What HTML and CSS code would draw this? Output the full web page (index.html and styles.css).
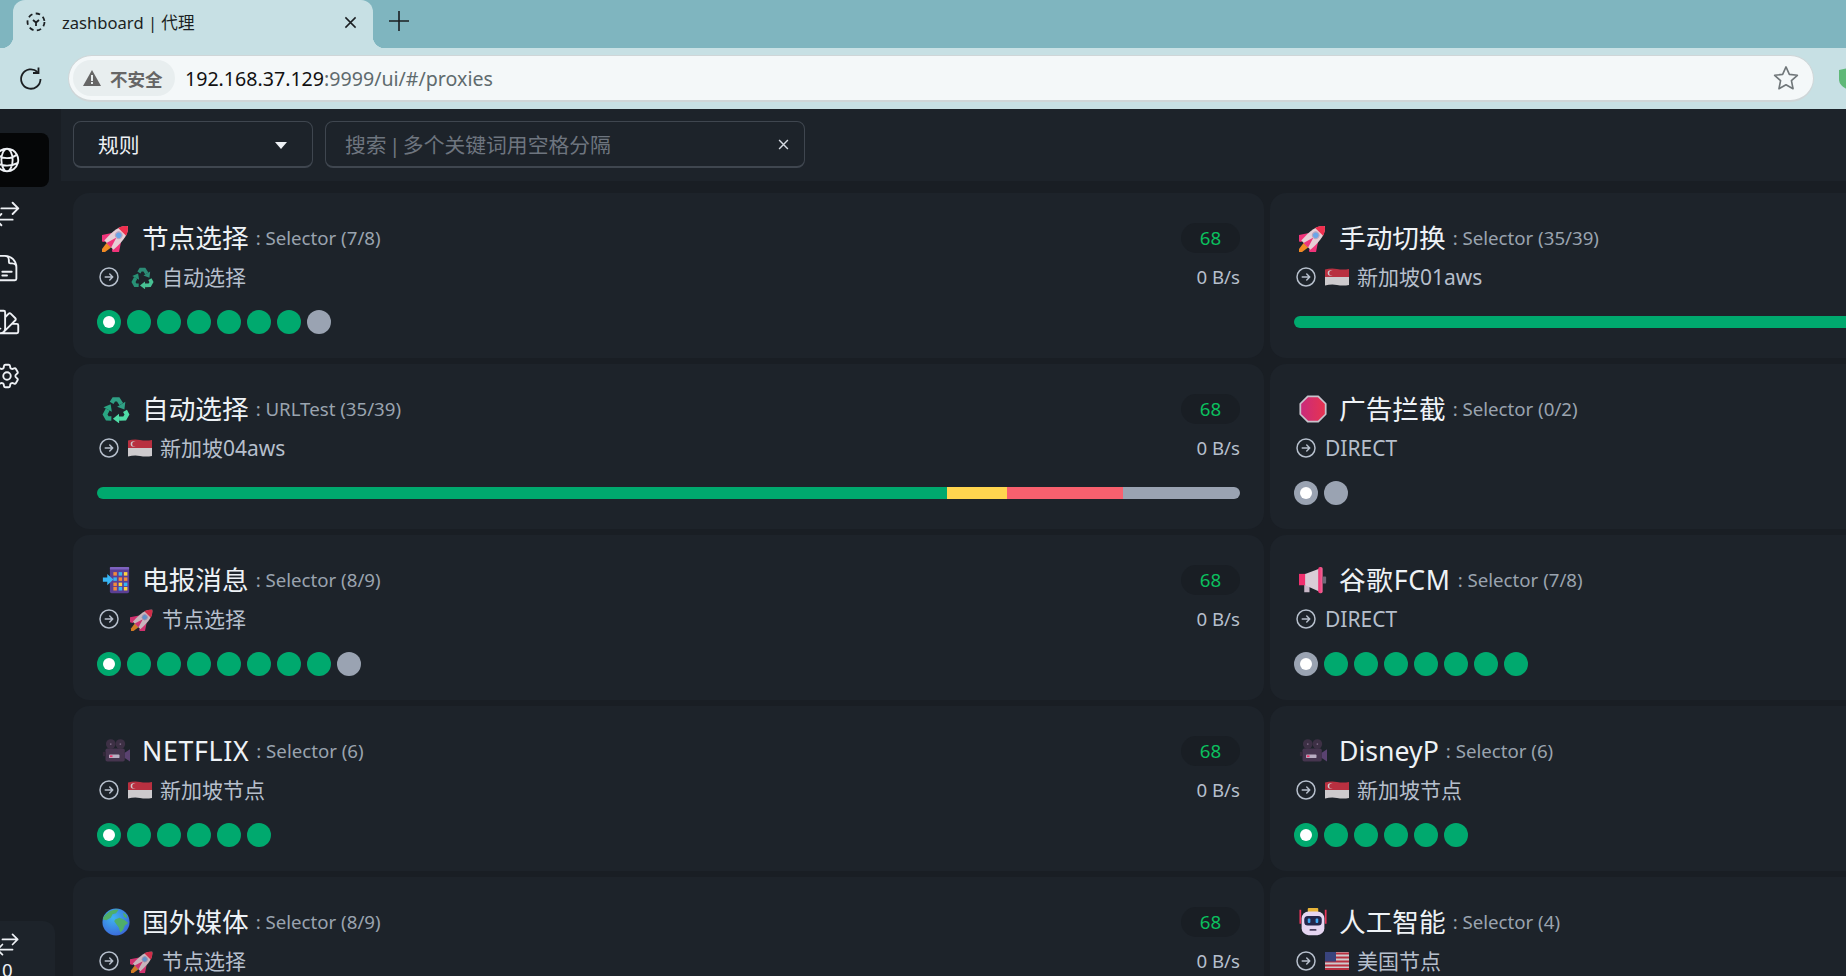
FILE: index.html
```html
<!DOCTYPE html>
<html lang="zh-CN">
<head>
    <meta charset="UTF-8">
    <title>zashboard | 代理</title>
    <link rel="stylesheet" href="styles.css">
</head>
<body>
    <!-- emoji drawn once, used by every card -->
    <svg class="sprites" aria-hidden="true">
        <defs>
            <linearGradient id="grad-stop" x1="0" x2="1" y1="0" y2="0"><stop offset="0" stop-color="#c92a7c"/><stop offset="1" stop-color="#e8344f"/></linearGradient>
            <linearGradient id="grad-horn" x1="0" x2="1" y1="0" y2="0"><stop offset="0" stop-color="#f02a6e"/><stop offset="1" stop-color="#f56a9a"/></linearGradient>
            <radialGradient id="grad-globe" cx=".4" cy=".35" r=".75"><stop offset="0" stop-color="#3fb4f0"/><stop offset="1" stop-color="#3a62d8"/></radialGradient>
            <g id="recycle-arm">
                <path d="M11 9l2.500-4h5l3.500 5.500" fill="none" stroke-width="5"/>
                <path d="M26.700 7.700L17.300 13.300 25.600 16.500z" stroke="none"/>
            </g>
            <symbol id="e-rocket" viewBox="4 2 26 26">
                <g transform="rotate(45 16 16)">
                    <path d="M13 24h6l-1 7-2 2-2-2z" fill="#f08a24"/>
                    <path d="M10 14l-6 9 2 5 5-3zM22 14l6 9-2 5-5-3z" fill="#f0347a"/>
                    <path d="M16 -1c5 4 7 11 6 25H10c-1-14 1-21 6-25z" fill="#e6cfd6"/>
                    <path d="M16 -1c2.500 2 4.200 4.400 5.200 7.500H10.800c1-3.100 2.700-5.500 5.200-7.500z" fill="#f0304f"/>
                    <path d="M16 14l3 10h-6z" fill="#f0347a"/>
                    <circle cx="16" cy="11" r="3" fill="#6aa6e8" stroke="#b9a4c0"/>
                </g>
            </symbol>
            <symbol id="e-recycle" viewBox="0 0 32 32">
                <use href="#recycle-arm" fill="#2f9f84" stroke="#2f9f84"/>
                <use href="#recycle-arm" fill="#4fdca6" stroke="#4fdca6" transform="rotate(120 16 18)"/>
                <use href="#recycle-arm" fill="#2aa583" stroke="#2aa583" transform="rotate(240 16 18)"/>
            </symbol>
            <symbol id="e-phone" viewBox="0 0 32 32">
                <rect x="9" y="1" width="22" height="30" rx="2" fill="#5b3f94"/>
                <rect x="9" y="1" width="22" height="3" rx="1" fill="#7e63c0"/>
                <g fill="#f28a3c"><rect x="13" y="7" width="4" height="4"/><rect x="19" y="13" width="4" height="4"/><rect x="25" y="13" width="4" height="4"/></g>
                <g fill="#35b4f2"><rect x="19" y="7" width="4" height="4"/><rect x="13" y="13" width="4" height="4"/><rect x="25" y="19" width="4" height="4"/></g>
                <g fill="#ffd23f"><rect x="25" y="7" width="4" height="4"/><rect x="19" y="19" width="4" height="4"/></g>
                <g fill="#f28a3c"><rect x="13" y="19" width="4" height="4"/><rect x="13" y="24" width="4" height="4"/></g>
                <rect x="19" y="24" width="4" height="4" fill="#35b4f2"/><rect x="25" y="24" width="4" height="4" fill="#ffd23f"/>
                <path d="M1 13h5V9l7 6.500L6 22v-4H1z" fill="#38b6f5"/>
            </symbol>
            <symbol id="e-camera" viewBox="0 0 32 32">
                <circle cx="10" cy="8" r="5.500" fill="#3d3045"/><circle cx="21" cy="8" r="5.500" fill="#3d3045"/>
                <circle cx="10" cy="8" r="1" fill="#7d6a86"/><circle cx="21" cy="8" r="1" fill="#7d6a86"/>
                <rect x="4" y="13" width="22" height="15" rx="2" fill="#46354f"/>
                <path d="M1 17h3v5H1z" fill="#332839"/>
                <path d="M26 18l6-4v14l-6-4z" fill="#5a4270"/>
                <rect x="8" y="20" width="12" height="4" rx="1" fill="#b9adc2"/>
                <rect x="9" y="21" width="3" height="2" fill="#f0306a"/>
            </symbol>
            <symbol id="e-globe" viewBox="0 0 32 32">
                <circle cx="16" cy="16" r="15.500" fill="url(#grad-globe)"/>
                <path d="M6 6c4-4 10-5 13-4l-3 4-4 1-2 4-5 3-4-1c0-2 2-5 5-7zM15 13l5-2 5 2 5 4-4 3-2 5-3 3-2-6-3-4-2-3zM24 5l4 3 1 4-4-2z" fill="#4fae6a"/>
            </symbol>
            <symbol id="e-stop" viewBox="0 0 32 32">
                <path d="M10 1.500h12l8.500 8.500v12L22 30.500H10L1.500 22V10z" fill="url(#grad-stop)" stroke="#c8c3cc" stroke-width="2" stroke-linejoin="round"/>
            </symbol>
            <symbol id="e-horn" viewBox="0 0 32 32">
                <rect x="6" y="21" width="6" height="9" fill="#c9b8c8"/>
                <rect x="0" y="9" width="8" height="13" fill="#f0306e"/>
                <path d="M7 9l16-6v26L7 22z" fill="#d9ccd6"/>
                <rect x="22" y="1" width="5" height="30" rx="2" fill="url(#grad-horn)"/>
                <rect x="27" y="12" width="4" height="8" rx="1" fill="#6d6877"/>
            </symbol>
            <symbol id="e-robot" viewBox="0 0 32 32">
                <path d="M1.500 2v16M30.500 2v16" stroke="#e8345a" stroke-width="2"/>
                <rect x="10" y="0" width="12" height="5" rx="1" fill="#e8b53a"/>
                <rect x="3" y="4" width="26" height="27" rx="8" fill="#e5d6f2"/>
                <rect x="6" y="9" width="20" height="11" rx="4" fill="#23264a"/>
                <rect x="10" y="12" width="3" height="5" rx="1" fill="#3fa9f5"/><rect x="19" y="12" width="3" height="5" rx="1" fill="#3fa9f5"/>
                <rect x="12" y="24" width="8" height="2" rx="1" fill="#4a4060"/>
            </symbol>
            <symbol id="e-sg" viewBox="0 0 24 18">
                <path d="M0 1.500Q6 0 12 1t12 0v8H0z" fill="#d43345"/>
                <path d="M0 9h24v8q-6 1-12 0t-12 .6z" fill="#ece8ea"/>
                <circle cx="5.500" cy="5" r="2.800" fill="#ece8ea"/><circle cx="6.800" cy="5" r="2.600" fill="#d43345"/>
            </symbol>
            <symbol id="e-us" viewBox="0 0 24 18">
                <rect width="24" height="18" rx="1" fill="#ece8ea"/>
                <path d="M0 1.500h24M0 5.500h24M0 9.500h24M0 13.500h24M0 17h24" stroke="#d43345" stroke-width="2"/>
                <rect width="11" height="9.500" fill="#3f4a8c"/>
            </symbol>
        </defs>
    </svg>

    <div class="tab-strip">
        <div class="tab">
            <svg class="favicon" viewBox="0 0 20 20" fill="none" stroke="#1b1f22" stroke-width="1.800">
                <circle cx="10" cy="10" r="8.500" stroke-dasharray="4.500 3.400"/>
                <path d="M7 8l3 2.500L13 8M10 10.500V14"/>
            </svg>
            <span class="tab-title">zashboard | 代理</span>
            <svg class="tab-close" viewBox="0 0 14 14" stroke="#1b1f22" stroke-width="1.600"><path d="M1.500 1.500l11 11M12.500 1.500l-11 11"/></svg>
        </div>
        <svg class="new-tab" viewBox="0 0 20 20" stroke="#1b1f22" stroke-width="1.600"><path d="M10 0v20M0 10h20"/></svg>
    </div>

    <div class="toolbar">
        <svg class="reload" viewBox="0 0 24 24" fill="none" stroke="#1b1f22" stroke-width="1.800">
            <path d="M21.500 12a9.700 9.700 0 1 1-3-7"/><path d="M19.500 0.500v5.500h-5.500"/>
        </svg>
        <div class="omnibox">
            <div class="not-secure">
                <svg class="warn" viewBox="0 0 18 16"><path d="M9 0l9 16H0z" fill="#666"/><path d="M8 5h2v6H8zM8 12h2v2H8z" fill="#e8eeef"/></svg>
                <span>不安全</span>
            </div>
            <div class="url"><span class="host">192.168.37.129</span>:9999/ui/#/proxies</div>
            <svg class="star" viewBox="0 0 24 24" fill="none" stroke="#70777a" stroke-width="1.500" stroke-linejoin="round"><path d="M12 1.800l3.100 6.900 7.400.8-5.500 5 1.500 7.400-6.500-3.700-6.500 3.700 1.500-7.400-5.500-5 7.400-.8z"/></svg>
        </div>
        <svg class="shield" viewBox="0 0 20 22"><path d="M0 2l10-2 10 2v9c0 6-5 9-10 11C5 20 0 17 0 11z" fill="#5fb878"/></svg>
    </div>

    <div class="app">
        <aside class="sidebar">
            <nav class="menu">
                <a class="menu-item active"><svg class="menu-icon" viewBox="0 0 24 24"><path d="M12 21a9.004 9.004 0 0 0 8.716-6.747M12 21a9.004 9.004 0 0 1-8.716-6.747M12 21c2.485 0 4.5-4.03 4.5-9S14.485 3 12 3m0 18c-2.485 0-4.5-4.03-4.5-9S9.515 3 12 3m0 0a8.997 8.997 0 0 1 7.843 4.582M12 3a8.997 8.997 0 0 0-7.843 4.582m15.686 0A11.953 11.953 0 0 1 12 10.500c-2.998 0-5.740-1.100-7.843-2.918m15.686 0A8.959 8.959 0 0 1 21 12c0 .778-.099 1.533-.284 2.253m0 0A17.919 17.919 0 0 1 12 16.500c-3.162 0-6.133-.815-8.716-2.247m0 0A9.015 9.015 0 0 1 3 12c0-1.605.42-3.113 1.157-4.418"/></svg></a>
                <a class="menu-item"><svg class="menu-icon" viewBox="0 0 24 24"><path d="M7.500 21 3 16.500m0 0L7.500 12M3 16.500h13.500m0-13.500L21 7.500m0 0L16.500 12M21 7.500H7.500"/></svg></a>
                <a class="menu-item"><svg class="menu-icon" viewBox="0 0 24 24"><path d="M19.500 14.250v-2.625a3.375 3.375 0 0 0-3.375-3.375h-1.500A1.125 1.125 0 0 1 13.500 7.125v-1.500a3.375 3.375 0 0 0-3.375-3.375H8.250m0 12.750h7.500m-7.500 3H12M10.500 2.250H5.625c-.621 0-1.125.504-1.125 1.125v17.250c0 .621.504 1.125 1.125 1.125h12.750c.621 0 1.125-.504 1.125-1.125V11.250a9 9 0 0 0-9-9Z"/></svg></a>
                <a class="menu-item"><svg class="menu-icon" viewBox="0 0 24 24"><path d="M4.098 19.902a3.750 3.750 0 0 0 5.304 0l6.401-6.402M6.750 21A3.750 3.750 0 0 1 3 17.250V4.125C3 3.504 3.504 3 4.125 3h5.250c.621 0 1.125.504 1.125 1.125v4.072M6.750 21a3.750 3.750 0 0 0 3.750-3.750V8.197M6.750 21h13.125c.621 0 1.125-.504 1.125-1.125v-5.250c0-.621-.504-1.125-1.125-1.125h-4.072M10.500 8.197l2.880-2.880c.438-.439 1.150-.439 1.590 0l3.712 3.713c.44.44.44 1.152 0 1.590l-2.879 2.880M6.750 17.250h.008v.008H6.750v-.008Z"/></svg></a>
                <a class="menu-item"><svg class="menu-icon" viewBox="0 0 24 24"><path d="M9.594 3.940c.09-.542.56-.94 1.110-.94h2.593c.55 0 1.020.398 1.110.94l.213 1.281c.063.374.313.686.645.870.074.04.147.083.22.127.325.196.72.257 1.075.124l1.217-.456a1.125 1.125 0 0 1 1.370.49l1.296 2.247a1.125 1.125 0 0 1-.26 1.431l-1.003.827c-.293.241-.438.613-.43.992a7.723 7.723 0 0 1 0 .255c-.008.378.137.75.43.991l1.004.827c.424.35.534.955.26 1.430l-1.298 2.247a1.125 1.125 0 0 1-1.369.491l-1.217-.456c-.355-.133-.75-.072-1.076.124a6.470 6.470 0 0 1-.22.128c-.331.183-.581.495-.644.869l-.213 1.281c-.09.543-.56.94-1.110.94h-2.594c-.55 0-1.019-.398-1.110-.94l-.213-1.281c-.062-.374-.312-.686-.644-.870a6.520 6.520 0 0 1-.22-.127c-.325-.196-.72-.257-1.076-.124l-1.217.456a1.125 1.125 0 0 1-1.369-.49l-1.297-2.247a1.125 1.125 0 0 1 .26-1.431l1.004-.827c.292-.24.437-.613.43-.991a6.932 6.932 0 0 1 0-.255c.007-.38-.138-.751-.43-.992l-1.004-.827a1.125 1.125 0 0 1-.26-1.430l1.297-2.247a1.125 1.125 0 0 1 1.370-.491l1.216.456c.356.133.751.072 1.076-.124.072-.044.146-.086.22-.128.332-.183.582-.495.644-.869l.214-1.280Z"/><path d="M15 12a3 3 0 1 1-6 0 3 3 0 0 1 6 0Z"/></svg></a>
            </nav>
            <div class="conn-box">
                <svg class="conn-icon" viewBox="0 0 24 24"><path d="M7.500 21 3 16.500m0 0L7.500 12M3 16.500h13.500m0-13.500L21 7.500m0 0L16.500 12M21 7.500H7.500"/></svg>
                <div class="conn-count">0</div>
            </div>
        </aside>

        <main class="main">
            <div class="ctrl-bar">
                <div class="mode-select">
                    <span>规则</span>
                    <i class="caret"></i>
                </div>
                <div class="search-box">
                    <span class="placeholder">搜索 | 多个关键词用空格分隔</span>
                    <svg class="search-clear" viewBox="0 0 10 10" stroke="#d5dae2" stroke-width="1.300"><path d="M1 1l8 8M9 1l-8 8"/></svg>
                </div>
            </div>

            <div class="groups">
                <section class="card">
                    <div class="card-row">
                        <h2 class="title"><svg class="emoji"><use href="#e-rocket"/></svg><span class="name">节点选择</span><span class="kind">: Selector (7/8)</span></h2>
                        <span class="latency">68</span>
                    </div>
                    <div class="card-row sub">
                        <div class="now"><svg class="go" viewBox="0 0 24 24"><path d="m12.750 15 3-3m0 0-3-3m3 3h-7.500M21 12a9 9 0 1 1-18 0 9 9 0 0 1 18 0Z"/></svg><svg class="mini"><use href="#e-recycle"/></svg><span>自动选择</span></div>
                        <span class="speed">0 B/s</span>
                    </div>
                    <div class="dots"><i class="dot on"></i><i class="dot"></i><i class="dot"></i><i class="dot"></i><i class="dot"></i><i class="dot"></i><i class="dot"></i><i class="dot off"></i></div>
                </section>

                <section class="card">
                    <div class="card-row">
                        <h2 class="title"><svg class="emoji"><use href="#e-rocket"/></svg><span class="name">手动切换</span><span class="kind">: Selector (35/39)</span></h2>
                    </div>
                    <div class="card-row sub">
                        <div class="now"><svg class="go" viewBox="0 0 24 24"><path d="m12.750 15 3-3m0 0-3-3m3 3h-7.500M21 12a9 9 0 1 1-18 0 9 9 0 0 1 18 0Z"/></svg><svg class="mini flag"><use href="#e-sg"/></svg><span>新加坡01aws</span></div>
                    </div>
                    <div class="bar"><i class="seg green" style="width:100%"></i></div>
                </section>

                <section class="card">
                    <div class="card-row">
                        <h2 class="title"><svg class="emoji"><use href="#e-recycle"/></svg><span class="name">自动选择</span><span class="kind">: URLTest (35/39)</span></h2>
                        <span class="latency">68</span>
                    </div>
                    <div class="card-row sub">
                        <div class="now"><svg class="go" viewBox="0 0 24 24"><path d="m12.750 15 3-3m0 0-3-3m3 3h-7.500M21 12a9 9 0 1 1-18 0 9 9 0 0 1 18 0Z"/></svg><svg class="mini flag"><use href="#e-sg"/></svg><span>新加坡04aws</span></div>
                        <span class="speed">0 B/s</span>
                    </div>
                    <div class="bar"><i class="seg green" style="width:74.4%"></i><i class="seg yellow" style="width:5.2%"></i><i class="seg red" style="width:10.2%"></i><i class="seg gray" style="width:10.2%"></i></div>
                </section>

                <section class="card">
                    <div class="card-row">
                        <h2 class="title"><svg class="emoji"><use href="#e-stop"/></svg><span class="name">广告拦截</span><span class="kind">: Selector (0/2)</span></h2>
                    </div>
                    <div class="card-row sub">
                        <div class="now"><svg class="go" viewBox="0 0 24 24"><path d="m12.750 15 3-3m0 0-3-3m3 3h-7.500M21 12a9 9 0 1 1-18 0 9 9 0 0 1 18 0Z"/></svg><span>DIRECT</span></div>
                    </div>
                    <div class="dots"><i class="dot off on"></i><i class="dot off"></i></div>
                </section>

                <section class="card">
                    <div class="card-row">
                        <h2 class="title"><svg class="emoji"><use href="#e-phone"/></svg><span class="name">电报消息</span><span class="kind">: Selector (8/9)</span></h2>
                        <span class="latency">68</span>
                    </div>
                    <div class="card-row sub">
                        <div class="now"><svg class="go" viewBox="0 0 24 24"><path d="m12.750 15 3-3m0 0-3-3m3 3h-7.500M21 12a9 9 0 1 1-18 0 9 9 0 0 1 18 0Z"/></svg><svg class="mini"><use href="#e-rocket"/></svg><span>节点选择</span></div>
                        <span class="speed">0 B/s</span>
                    </div>
                    <div class="dots"><i class="dot on"></i><i class="dot"></i><i class="dot"></i><i class="dot"></i><i class="dot"></i><i class="dot"></i><i class="dot"></i><i class="dot"></i><i class="dot off"></i></div>
                </section>

                <section class="card">
                    <div class="card-row">
                        <h2 class="title"><svg class="emoji"><use href="#e-horn"/></svg><span class="name caps">谷歌FCM</span><span class="kind">: Selector (7/8)</span></h2>
                    </div>
                    <div class="card-row sub">
                        <div class="now"><svg class="go" viewBox="0 0 24 24"><path d="m12.750 15 3-3m0 0-3-3m3 3h-7.500M21 12a9 9 0 1 1-18 0 9 9 0 0 1 18 0Z"/></svg><span>DIRECT</span></div>
                    </div>
                    <div class="dots"><i class="dot off on"></i><i class="dot"></i><i class="dot"></i><i class="dot"></i><i class="dot"></i><i class="dot"></i><i class="dot"></i><i class="dot"></i></div>
                </section>

                <section class="card">
                    <div class="card-row">
                        <h2 class="title"><svg class="emoji"><use href="#e-camera"/></svg><span class="name caps">NETFLIX</span><span class="kind">: Selector (6)</span></h2>
                        <span class="latency">68</span>
                    </div>
                    <div class="card-row sub">
                        <div class="now"><svg class="go" viewBox="0 0 24 24"><path d="m12.750 15 3-3m0 0-3-3m3 3h-7.500M21 12a9 9 0 1 1-18 0 9 9 0 0 1 18 0Z"/></svg><svg class="mini flag"><use href="#e-sg"/></svg><span>新加坡节点</span></div>
                        <span class="speed">0 B/s</span>
                    </div>
                    <div class="dots"><i class="dot on"></i><i class="dot"></i><i class="dot"></i><i class="dot"></i><i class="dot"></i><i class="dot"></i></div>
                </section>

                <section class="card">
                    <div class="card-row">
                        <h2 class="title"><svg class="emoji"><use href="#e-camera"/></svg><span class="name">DisneyP</span><span class="kind">: Selector (6)</span></h2>
                    </div>
                    <div class="card-row sub">
                        <div class="now"><svg class="go" viewBox="0 0 24 24"><path d="m12.750 15 3-3m0 0-3-3m3 3h-7.500M21 12a9 9 0 1 1-18 0 9 9 0 0 1 18 0Z"/></svg><svg class="mini flag"><use href="#e-sg"/></svg><span>新加坡节点</span></div>
                    </div>
                    <div class="dots"><i class="dot on"></i><i class="dot"></i><i class="dot"></i><i class="dot"></i><i class="dot"></i><i class="dot"></i></div>
                </section>

                <section class="card">
                    <div class="card-row">
                        <h2 class="title"><svg class="emoji"><use href="#e-globe"/></svg><span class="name">国外媒体</span><span class="kind">: Selector (8/9)</span></h2>
                        <span class="latency">68</span>
                    </div>
                    <div class="card-row sub">
                        <div class="now"><svg class="go" viewBox="0 0 24 24"><path d="m12.750 15 3-3m0 0-3-3m3 3h-7.500M21 12a9 9 0 1 1-18 0 9 9 0 0 1 18 0Z"/></svg><svg class="mini"><use href="#e-rocket"/></svg><span>节点选择</span></div>
                        <span class="speed">0 B/s</span>
                    </div>
                </section>

                <section class="card">
                    <div class="card-row">
                        <h2 class="title"><svg class="emoji"><use href="#e-robot"/></svg><span class="name">人工智能</span><span class="kind">: Selector (4)</span></h2>
                    </div>
                    <div class="card-row sub">
                        <div class="now"><svg class="go" viewBox="0 0 24 24"><path d="m12.750 15 3-3m0 0-3-3m3 3h-7.500M21 12a9 9 0 1 1-18 0 9 9 0 0 1 18 0Z"/></svg><svg class="mini flag"><use href="#e-us"/></svg><span>美国节点</span></div>
                    </div>
                </section>
            </div>
        </main>
    </div>
</body>
</html>
```

FILE: styles.css
```css
/* Base styling */
html, body {
    height: 100%;
}

body {
    margin: 0;
    display: flex;
    flex-direction: column;
    overflow: hidden;
    font-family: "Noto Sans", "Noto Sans CJK SC", sans-serif;
    background-color: #1d232a;
}

.sprites {
    position: absolute;
    width: 0;
    height: 0;
}

/* Browser tab strip */
.tab-strip {
    flex: none;
    height: 48px;
    display: flex;
    align-items: center;
    gap: 16px;
    padding-left: 13px;
    background-color: #7fb5bf;
}

.tab {
    position: relative;
    width: 360px;
    height: 48px;
    box-sizing: border-box;
    padding: 0 16px 4px 13px;
    display: flex;
    align-items: center;
    background-color: #c7e0e4;
    border-radius: 12px 12px 0 0;
}

.tab::before,
.tab::after {
    content: "";
    position: absolute;
    bottom: 0;
    width: 12px;
    height: 12px;
}

.tab::before {
    left: -12px;
    background: radial-gradient(circle at 0 0, transparent 12px, #c7e0e4 12.5px);
}

.tab::after {
    right: -12px;
    background: radial-gradient(circle at 100% 0, transparent 12px, #c7e0e4 12.5px);
}

.favicon {
    width: 20px;
    height: 20px;
    flex: none;
}

.tab-title {
    flex: 1;
    margin-left: 16px;
    font-size: 16.600px;
    color: #1b1f22;
}

.tab-close {
    width: 13px;
    height: 13px;
    fill: none;
}

.new-tab {
    width: 20px;
    height: 20px;
    margin: -6px 0 0 0;
    fill: none;
}

/* Address bar */
.toolbar {
    flex: none;
    height: 61px;
    display: flex;
    align-items: center;
    padding-left: 19px;
    background-color: #c7e0e4;
    overflow: hidden;
}

.reload {
    width: 24px;
    height: 24px;
    flex: none;
    margin-right: 25px;
}

.omnibox {
    flex: none;
    width: 1746px;
    height: 47px;
    box-sizing: border-box;
    display: flex;
    align-items: center;
    padding: 0 14px 0 4px;
    background-color: #f4f8f9;
    border: 1px solid #cfd6d8;
    border-bottom-width: 2px;
    border-radius: 24px;
}

.not-secure {
    flex: none;
    width: 102px;
    height: 36px;
    box-sizing: border-box;
    display: flex;
    align-items: center;
    gap: 9px;
    padding-left: 10px;
    border-radius: 18px;
    background-color: #e8eeef;
    font-size: 17.500px;
    font-weight: 700;
    color: #666;
}

.warn {
    width: 18px;
    height: 16px;
    flex: none;
}

.url {
    flex: 1;
    margin-left: 10px;
    font-size: 19.600px;
    color: #5f6b6e;
}

.host {
    color: #111;
}

.star {
    width: 26px;
    height: 26px;
    flex: none;
}

.shield {
    flex: none;
    width: 20px;
    height: 22px;
    margin-left: 25px;
}

/* App frame */
.app {
    flex: 1;
    min-height: 0;
    display: flex;
}

.sidebar {
    flex: none;
    width: 61px;
    display: flex;
    flex-direction: column;
    justify-content: space-between;
    background-color: #191e24;
}

.menu {
    padding-top: 24px;
}

.menu-item {
    display: flex;
    align-items: center;
    width: 49px;
    height: 54px;
    border-radius: 0 8px 8px 0;
}

.menu-item.active {
    background-color: #050607;
}

.menu-icon {
    flex: none;
    width: 30px;
    height: 30px;
    margin-left: -8px;
    fill: none;
    stroke: #eef1f5;
    stroke-width: 1.5;
    stroke-linecap: round;
    stroke-linejoin: round;
}

.conn-box {
    width: 55px;
    height: 55px;
    overflow: hidden;
    padding: 10px 0 0 2px;
    box-sizing: border-box;
    background-color: #1d232a;
    border-radius: 0 12px 0 0;
}

.conn-icon {
    display: block;
    width: 27px;
    height: 27px;
    margin-left: -8px;
    fill: none;
    stroke: #eef1f5;
    stroke-width: 1.5;
    stroke-linecap: round;
    stroke-linejoin: round;
}

.conn-count {
    font-size: 18.600px;
    line-height: 24px;
    color: #eef1f5;
}

/* Main column */
.main {
    flex: 1;
    min-width: 0;
    display: flex;
    flex-direction: column;
    overflow: hidden;
}

.ctrl-bar {
    flex: none;
    display: flex;
    gap: 12px;
    padding: 12px 12px 13px;
}

.mode-select,
.search-box {
    height: 47px;
    box-sizing: border-box;
    display: flex;
    align-items: center;
    justify-content: space-between;
    border: 1px solid #3f464f;
    border-bottom-width: 2px;
    border-radius: 8px;
    background-color: #1d232a;
    font-size: 20.800px;
}

.mode-select {
    width: 240px;
    padding: 0 25px 0 24px;
    color: #eef1f5;
}

.caret {
    width: 0;
    height: 0;
    margin-top: 2px;
    border-style: solid;
    border-width: 7px 6px 0;
    border-color: #eef1f5 transparent transparent;
}

.search-box {
    width: 480px;
    padding: 0 15px 0 19px;
}

.placeholder {
    word-spacing: -3px;
    color: #6e757f;
}

.search-clear {
    width: 11px;
    height: 11px;
    fill: none;
}

.groups {
    flex: 1;
    display: grid;
    grid-template-columns: 1191px 1191px;
    grid-auto-rows: 165px;
    gap: 6px;
    padding: 12px;
    background-color: #191e24;
}

/* Proxy group card */
.card {
    box-sizing: border-box;
    padding: 24px;
    background-color: #1d232a;
    border-radius: 16px;
}

.card-row {
    display: flex;
    align-items: center;
    justify-content: space-between;
    height: 40px;
}

.title {
    margin: 1px 0 0;
    display: flex;
    align-items: center;
    font-weight: 400;
    line-height: 36px;
}

.emoji {
    flex: none;
    width: 28px;
    height: 28px;
    margin: 0 12px 0 5px;
}

.name {
    font-size: 26.670px;
    color: #eef2f6;
}

.caps {
    letter-spacing: .7px;
}

.kind {
    margin-left: 7px;
    font-size: 18.670px;
    color: #9aa3af;
}

.latency {
    width: 59px;
    height: 30px;
    margin-top: 1px;
    line-height: 30px;
    text-align: center;
    border-radius: 15px;
    background-color: #191e24;
    font-size: 18.670px;
    color: #0bbf5e;
}

.sub {
    color: #b6bfcc;
}

.now {
    display: flex;
    align-items: center;
    font-size: 21px;
    line-height: 28px;
}

.go {
    flex: none;
    width: 24px;
    height: 24px;
    margin-right: 7px;
    fill: none;
    stroke: #b6bfcc;
    stroke-width: 1.5;
    stroke-linecap: round;
    stroke-linejoin: round;
}

.mini {
    flex: none;
    width: 25px;
    height: 23px;
    margin: 0 7px 0 2px;
    opacity: .85;
}

.mini.flag {
    width: 24px;
    height: 18px;
    margin: 0 8px 0 0;
}

.speed {
    margin-top: -2px;
    font-size: 18.670px;
}

.dots {
    display: flex;
    gap: 6px;
    margin-top: 13px;
}

.dot {
    width: 24px;
    height: 24px;
    display: flex;
    align-items: center;
    justify-content: center;
    border-radius: 50%;
    background-color: #00a96e;
}

.dot.off {
    background-color: #9aa3b2;
}

.dot.on::after {
    content: "";
    width: 12px;
    height: 12px;
    border-radius: 50%;
    background-color: #fff;
}

.bar {
    display: flex;
    height: 12px;
    margin-top: 19px;
    border-radius: 6px;
    overflow: hidden;
}

.seg {
    display: block;
}

.seg.green { background-color: #00a96e; }
.seg.yellow { background-color: #ffd54f; }
.seg.red { background-color: #f8606e; }
.seg.gray { background-color: #9aa3b2; }
```
